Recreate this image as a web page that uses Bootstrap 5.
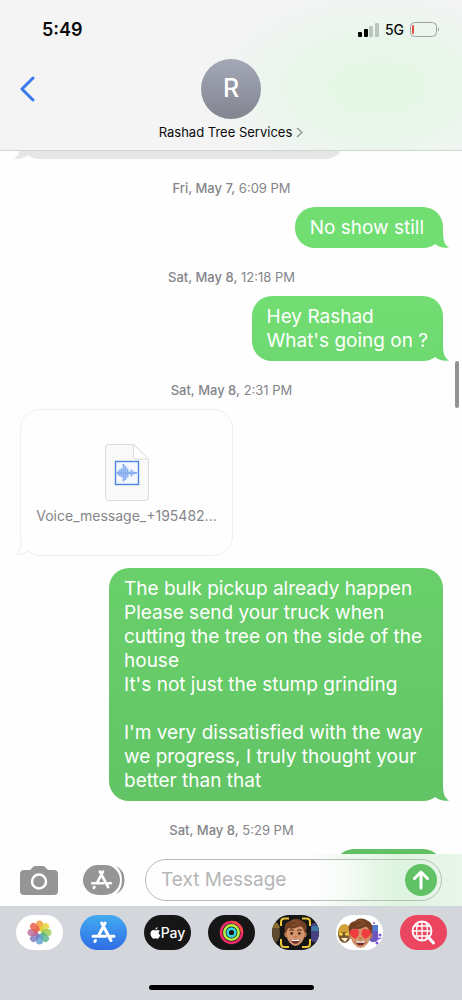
<!DOCTYPE html>
<html lang="en">
<head>
<meta charset="utf-8">
<meta name="viewport" content="width=device-width, initial-scale=1">
<title>Rashad Tree Services</title>
<link href="https://cdn.jsdelivr.net/npm/bootstrap@5.3.0/dist/css/bootstrap.min.css" rel="stylesheet">
<script src="https://cdn.jsdelivr.net/npm/bootstrap@5.3.0/dist/js/bootstrap.bundle.min.js"></script>
<style>
  body { font-family: Inter, "Liberation Sans", sans-serif; color: #0b0b0b; background: #fefefe; }
  svg { display: block; }
  .top-bar { background: radial-gradient(ellipse 170px 100px at 82% 58%, #e2f6e1 0%, #e8f6ea 45%, rgba(243,245,244,0) 100%), #f4f4f5; border-bottom: 1px solid #d2d6d3; height: 151px; }
  .status-row { height: 59px; padding: 0 22px 0 42px; }
  .clock { font-size: 18px; font-weight: 600; line-height: 24px; }
  .network { font-size: 14px; font-weight: 500; line-height: 20px; margin: 0 6px; }
  .nav-grid { display: grid; grid-template-columns: 1fr auto 1fr; }
  .back-btn { padding: 17px 20px; border: 0; background: none; }
  .avatar { width: 60px; height: 60px; font-size: 25px; font-weight: 500; background: linear-gradient(#a4a8b6, #828490); }
  .contact-name { font-size: 13px; line-height: 18px; margin-top: 4px; color: #0b0b0b; }
  .thread { padding-right: 19px; padding-left: 20px; }
  .stamp { font-size: 13px; line-height: 18px; margin: 20px 0 10px; color: #85858a; }
  .stamp b { font-weight: 500; }
  .bubble { position: relative; padding: 9px 15px 8px; border-radius: 20px; font-size: 19px; line-height: 24px; color: #fff; max-width: 334px; min-height: 41px; }
  .bubble-short { padding-right: 19px; }
  .bubble-full { width: 334px; }
  .tail { position: absolute; right: -6px; bottom: 0; }
  .tail-left { right: auto; left: -6px; transform: scaleX(-1); }
  .green-1 { background: #71de72; color: #71de72; }
  .green-2 { background: linear-gradient(#71dd72, #6dd970); color: #6dd970; }
  .green-3 { background: linear-gradient(#69d06b, #62c465); color: #62c465; }
  .green-4 { background: #60c163; width: 109px; }
  .bubble span { color: #fff; }
  .bubble-old { background: #e6e6e8; color: #e6e6e8; width: 325px; margin-top: -33px; }
  .voice { position: relative; width: 213px; height: 147px; border: 1px solid #efeff0; border-radius: 20px; background: #fefefe; margin-bottom: 12px; padding-top: 34px; }
  .voice-name { font-size: 14px; line-height: 20px; margin-top: 5px; color: #85858a; }
  .scroll-thumb { position: absolute; right: 3px; top: 210px; width: 4px; height: 47px; border-radius: 2px; background: #929294; }
  .compose { height: 52px; padding: 0 20px; background: linear-gradient(90deg, rgba(222,245,224,0) 66%, #def4df 86%, #e9f5ea 100%), #fefefe; }
  .plain-btn { padding: 0; border: 0; background: none; }
  .entry { border: 1px solid #b9bdba; border-radius: 21px; height: 42px; margin-left: 20px; padding: 0 4px 0 15px; min-width: 0; background: linear-gradient(90deg, #fefefe 50%, rgba(254,254,254,0) 78%); }
  .entry input { font-size: 19px; line-height: 24px; background: none; border: 0; outline: 0; width: 0; }
  .entry input::placeholder { color: #b4b6b8; opacity: 1; }
  .send { width: 32px; height: 32px; background: #60c265; }
  .app-strip { height: 94px; padding: 9px 15px 0 16px; background: #d3d6db; }
  .app { width: 47px; height: 35px; border-radius: 18px; padding: 0; border: 0; overflow: hidden; }
  .app-store { background: linear-gradient(#43abf1, #2f6de4); }
  .app-dark { background: #161617; }
  .app-pay { color: #fff; font-size: 14px; font-weight: 500; line-height: 18px; }
  .app-search { background: #ec4560; }
  .home-bar { width: 165px; height: 5px; border-radius: 3px; background: #000; margin-top: 35px; }
</style>
</head>
<body>
<svg width="0" height="0" class="position-absolute" aria-hidden="true">
  <defs>
    <symbol id="tail" viewBox="0 0 16 20"><path d="M0 0H10C10 9 10 16 16 19.600C10.500 20.500 5.500 19 2 16L0 14Z" fill="currentColor"/></symbol>
    <symbol id="store" viewBox="0 0 26 24"><g fill="none" stroke="#fff" stroke-width="3" stroke-linecap="round"><path d="M11.2 3L20.5 20.5M14.6 3L8 15.8M2.5 16.2H15M20.5 16.2H23.5M5 20.5L4.4 21.4"/></g></symbol>
    <symbol id="face" viewBox="0 0 28 32">
      <ellipse cx="4" cy="18" rx="2.5" ry="3.5" fill="#b87550"/><ellipse cx="24" cy="18" rx="2.5" ry="3.5" fill="#b87550"/>
      <path d="M4 12Q4 5 14 5Q24 5 24 12V19Q23 29 14 31Q5 29 4 19Z" fill="#d4946c"/>
      <path d="M3 17Q-1 5 8 3Q14-2 22 3Q29 7 25 17L23 13Q22 9 19 9Q11 13 6 11Q4 14 3 17Z" fill="#713f23"/>
      <path d="M7 5Q12 1 17 4M10 8Q15 8 19 5" stroke="#955d35" fill="none"/>
      <path d="M7 14Q9 12 12 14M16 14Q19 12 21 14" stroke="#593018" fill="none" stroke-width="1.2"/>
      <circle cx="9.700" cy="17" r="1.500" fill="#3c2218"/><circle cx="18.300" cy="17" r="1.500" fill="#3c2218"/>
      <path d="M12.500 20.500Q14 22 15.500 20.500" stroke="#b0683f" fill="none"/>
      <path d="M8.500 23.500Q14 25 19.500 23.500Q18 28.500 14 28.500Q10 28.500 8.500 23.500Z" fill="#702c27"/><path d="M9 23.6Q14 25 19 23.6L18 25.500H10Z" fill="#fff"/>
    </symbol>
  </defs>
</svg>

<div class="vh-100 d-flex flex-column overflow-hidden">
  <header class="top-bar flex-shrink-0">
    <div class="status-row d-flex align-items-center justify-content-between">
      <span class="clock">5:49</span>
      <div class="d-flex align-items-center">
        <svg width="21" height="14" aria-label="Signal"><rect y="9" width="4" height="5" rx="1"/><rect x="6" y="6" width="4" height="8" rx="1"/><g fill="#bac5bd"><rect x="11" y="3" width="4" height="11" rx="1"/><rect x="17" width="4" height="14" rx="1"/></g></svg>
        <span class="network">5G</span>
        <svg width="30" height="15" aria-label="Battery"><rect x=".5" y=".5" width="26" height="14" rx="4" fill="none" stroke="#9da29f"/><rect x="2" y="3" width="2" height="9" rx="1" fill="#e8503e"/><path d="M28 5.5Q30 7.5 28 9.5Z" fill="#8d928f"/></svg>
      </div>
    </div>
    <div class="nav-grid">
      <div><button class="back-btn" aria-label="Back"><svg width="15" height="26" fill="none" stroke="#3b79ec" stroke-width="3" stroke-linecap="round" stroke-linejoin="round"><path d="M13 2L2 13L13 24"/></svg></button></div>
      <a href="#" class="d-flex flex-column align-items-center text-decoration-none">
        <span class="avatar rounded-circle d-flex align-items-center justify-content-center text-white">R</span>
        <span class="contact-name d-flex align-items-center gap-1">Rashad Tree Services <svg width="7" height="11" fill="none" stroke="#8d8d91" stroke-width="1.2"><path d="M1 1L6 5.5L1 10"/></svg></span>
      </a>
    </div>
  </header>

  <main class="position-relative flex-fill overflow-hidden">
    <div class="thread d-flex flex-column">
      <div class="bubble bubble-old flex-shrink-0"><svg class="tail tail-left" width="16" height="20"><use href="#tail"/></svg></div>
      <div class="stamp text-center"><b>Fri, May 7,</b> 6:09 PM</div>
      <div class="bubble bubble-short green-1 align-self-end"><span>No show still</span><svg class="tail" width="16" height="20"><use href="#tail"/></svg></div>
      <div class="stamp text-center"><b>Sat, May 8,</b> 12:18 PM</div>
      <div class="bubble green-2 align-self-end"><span>Hey Rashad<br>What's going on ?</span><svg class="tail" width="16" height="20"><use href="#tail"/></svg></div>
      <div class="stamp text-center"><b>Sat, May 8,</b> 2:31 PM</div>
      <div class="voice d-flex flex-column align-items-center">
        <svg width="44" height="57"><path d="M3 .5H29L43.5 15V54Q43.5 56.5 41 56.5H3Q.5 56.5 .5 54V3Q.5 .5 3 .5Z" fill="#f9f9fa" stroke="#dcdcde"/><path d="M28.5 .5V12Q28.5 15 31.5 15H43.5Z" fill="#fff" stroke="#dcdcde"/><rect x="10.5" y="17.5" width="23" height="23" fill="#f4f8fe" stroke="#4e85e0" stroke-width="1.4"/><path d="M12.5 27.500V30.500M14.5 25.500V32M16.5 24.500V33M18.5 20V37.500M20.5 22V36M22.5 24.500V33.500M24.5 27.500V30.500M26.5 25.500V32.500M28.5 27.500V30.500M31 28V30M12 29H32" stroke="#8ab0f0" stroke-width="1.800"/></svg>
        <span class="voice-name text-nowrap">Voice_message_+195482...</span>
        <svg class="tail tail-left" width="16" height="20"><path d="M0 0H9V6C9 12 10 17 15 19.500C10 20 6 18.500 3 16L0 18Z" fill="#fefefe"/><path d="M9.500 4C9.500 12 10.500 17 15.500 19.500C10 20 6 18.500 3 16Q0 18.500-4 19.500" fill="none" stroke="#efeff0"/></svg>
      </div>
      <div class="bubble bubble-full green-3 align-self-end"><span>The bulk pickup already happen<br>Please send your truck when<br>cutting the tree on the side of the<br>house<br>It's not just the stump grinding<br><br>I'm very dissatisfied with the way<br>we progress, I truly thought your<br>better than that</span><svg class="tail" width="16" height="20"><use href="#tail"/></svg></div>
      <div class="stamp text-center"><b>Sat, May 8,</b> 5:29 PM</div>
      <div class="bubble green-4 align-self-end"></div>
    </div>
    <div class="scroll-thumb"></div>
  </main>

  <footer class="flex-shrink-0">
    <form class="compose d-flex align-items-center">
      <button type="button" class="plain-btn" aria-label="Camera"><svg width="38" height="29"><path d="M4 4H10L13 1Q14 0 15 0H23Q24 0 25 1L28 4H34Q38 4 38 8V25Q38 29 34 29H4Q0 29 0 25V8Q0 4 4 4Z" fill="#959595"/><circle cx="19" cy="15.500" r="7" fill="none" stroke="#fff" stroke-width="2.500"/></svg></button>
      <button type="button" class="plain-btn ms-4" aria-label="Apps"><svg width="43" height="30"><path d="M34 1Q42.500 5 42.500 15T34 29Q40 24 40 15T34 1Z" fill="#959595"/><rect x="1" width="37" height="30" rx="15" fill="#959595"/><use href="#store" x="8" y="3" width="23" height="23"/></svg></button>
      <div class="entry d-flex align-items-center flex-fill">
        <input type="text" class="flex-fill p-0" placeholder="Text Message" aria-label="Text Message">
        <button type="button" class="plain-btn send rounded-circle d-flex align-items-center justify-content-center flex-shrink-0" aria-label="Send"><svg width="18" height="20" fill="none" stroke="#fff" stroke-width="3" stroke-linecap="round" stroke-linejoin="round"><path d="M9 18V2M2.500 8.500L9 2L15.500 8.500"/></svg></button>
      </div>
    </form>
    <div class="app-strip">
      <div class="d-flex justify-content-between">
        <button class="app bg-white" aria-label="Photos"><svg width="47" height="35"><g transform="translate(23.500 17.500)" fill-opacity=".8"><rect x="-3.500" y="-12" width="7" height="10.500" rx="3.500" fill="#f49a2f"/><rect x="-3.500" y="-12" width="7" height="10.500" rx="3.500" fill="#e7d133" transform="rotate(45)"/><rect x="-3.500" y="-12" width="7" height="10.500" rx="3.500" fill="#9ac94f" transform="rotate(90)"/><rect x="-3.500" y="-12" width="7" height="10.500" rx="3.500" fill="#55b286" transform="rotate(135)"/><rect x="-3.500" y="-12" width="7" height="10.500" rx="3.500" fill="#5b9ed3" transform="rotate(180)"/><rect x="-3.500" y="-12" width="7" height="10.500" rx="3.500" fill="#7976bb" transform="rotate(225)"/><rect x="-3.500" y="-12" width="7" height="10.500" rx="3.500" fill="#ba6799" transform="rotate(270)"/><rect x="-3.500" y="-12" width="7" height="10.500" rx="3.500" fill="#e85844" transform="rotate(315)"/></g></svg></button>
        <button class="app app-store" aria-label="App Store"><svg width="47" height="35"><use href="#store" x="10" y="5" width="27" height="24"/></svg></button>
        <button class="app app-dark app-pay d-flex align-items-center justify-content-center" aria-label="Apple Pay"><svg width="11" height="12" viewBox="0 0 11 12" fill="#fff"><path d="M7.500 0Q7.600 2.200 5.300 2.800Q5.200 .7 7.500 0M5.500 3.500Q8 2.200 9.800 4Q7.200 6.200 10.300 8.200Q8.700 12 7.300 11.700Q5.500 11 4 11.700Q2.300 12 .9 8.700Q-.5 4.500 2.300 3.300Q3.600 2.800 5.500 3.500"/></svg>Pay</button>
        <button class="app app-dark" aria-label="Fitness"><svg width="47" height="35" fill="none" stroke-width="2.600"><circle cx="23.500" cy="17.500" r="10.500" stroke="#ed2967"/><circle cx="23.500" cy="17.500" r="7.200" stroke="#b7ef44"/><circle cx="23.500" cy="17.500" r="3.900" stroke="#36d5df"/><path d="M23.500 7A10.500 10.500 0 0 1 34 17.500" stroke="#f54a4b"/></svg></button>
        <button class="app app-dark" aria-label="Memoji"><svg width="47" height="35"><ellipse cx="2" cy="18" rx="6" ry="10" fill="#5d4a30"/><path d="M0 8Q6 5 8 13H0Z" fill="#8a6d2e"/><rect x="39" y="8" width="8" height="19" rx="3" fill="#464282"/><path d="M40 11H47V16H39Z" fill="#3d7aa3"/><rect x="8" y="3" width="31" height="30" fill="#161617"/><use href="#face" x="11" y="3" width="25" height="29"/><path d="M9 11V7Q9 3.500 12.500 3.500H17M30 3.500H34.500Q38 3.500 38 7V11M38 24V28.500Q38 32 34.500 32H30M17 32H12.500Q9 32 9 28.500V24" fill="none" stroke="#edc735" stroke-width="2"/></svg></button>
        <button class="app bg-white" aria-label="Stickers"><svg width="47" height="35"><ellipse cx="8.500" cy="19" rx="6.500" ry="9" fill="#7b592b"/><path d="M2 17Q3 9 9 9Q15 10 15 17Z" fill="#d1a338"/><path d="M3 17L7 18L6 21L3 20ZM9 18L13 17V21L9 20Z" fill="#f5cf43"/><path d="M5 23H12L9 27Z" fill="#fff1d5"/><rect x="33" y="10" width="9" height="17" rx="4" fill="#6957bd"/><path d="M33 10H42V16H33Z" fill="#517dcc"/><path d="M38 22L46 23L42 25Z" fill="#7b54dc"/><g fill="#7b54dc"><circle cx="44" cy="20" r="1.500"/><circle cx="41" cy="28" r="1.500"/><circle cx="38" cy="8" r="1"/></g><use href="#face" x="11" y="3" width="27" height="31"/><path d="M14 17Q14 14 17 15Q20 12 22 15Q25 20 19 24Q13 20 14 17M26 16Q28 12 31 15Q34 13 35 17Q35 21 29 24Q24 20 26 16" fill="#f03e40"/></svg></button>
        <button class="app app-search" aria-label="Image search"><svg width="47" height="35" fill="none" stroke="#fff"><path d="M14 11H30M12 16H32M14 21H30M18 8Q15 16 18 24M22 7V26M26 8Q29 16 26 24" stroke-width="1.300"/><circle cx="22" cy="16" r="9.500" stroke-width="1.800"/><path d="M29 23L33.500 28" stroke-width="3" stroke-linecap="round"/></svg></button>
      </div>
      <div class="home-bar mx-auto"></div>
    </div>
  </footer>
</div>
</body>
</html>
